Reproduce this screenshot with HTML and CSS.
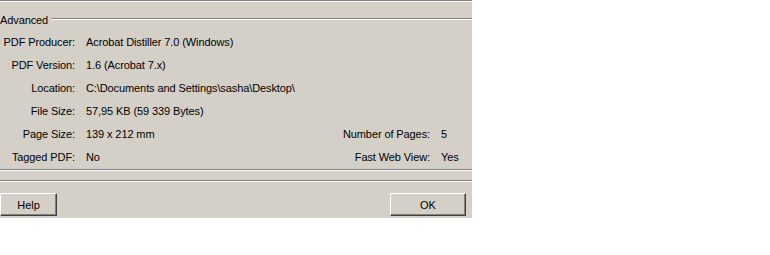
FILE: index.html
```html
<!DOCTYPE html>
<html lang="en">
<head>
    <meta charset="UTF-8">
    <title>Document Properties - Advanced</title>
    <link rel="stylesheet" href="styles.css">
</head>
<body>
    <div class="dialog">
        <div class="top-rule"></div>

        <div class="group-title">
            <span>Advanced</span>
            <div class="etched"></div>
        </div>

        <div class="props">
            <div class="label">PDF Producer:</div>
            <div class="value">Acrobat Distiller 7.0 (Windows)</div>
            <div></div><div></div>

            <div class="label">PDF Version:</div>
            <div class="value">1.6 (Acrobat 7.x)</div>
            <div></div><div></div>

            <div class="label">Location:</div>
            <div class="value">C:\Documents and Settings\sasha\Desktop\</div>
            <div></div><div></div>

            <div class="label">File Size:</div>
            <div class="value">57,95 KB (59 339 Bytes)</div>
            <div></div><div></div>

            <div class="label">Page Size:</div>
            <div class="value">139 x 212 mm</div>
            <div class="label">Number of Pages:</div>
            <div class="value">5</div>

            <div class="label">Tagged PDF:</div>
            <div class="value">No</div>
            <div class="label">Fast Web View:</div>
            <div class="value">Yes</div>
        </div>

        <div class="etched group-end"></div>
        <div class="etched separator"></div>

        <div class="buttons">
            <button class="btn btn-help">Help</button>
            <button class="btn btn-ok">OK</button>
        </div>
    </div>
</body>
</html>
```

FILE: styles.css
```css
/* classic windows dialog */
body {
    margin: 0;
    padding: 0;
    background-color: #fff;
    font-family: "Liberation Sans", Arial, sans-serif;
    font-size: 11px;
    letter-spacing: -0.1px;
    color: #000;
}

.dialog {
    width: 472px;
    height: 218px;
    background-color: #d4d0c8;
    display: flex;
    flex-direction: column;
}

.top-rule {
    border-top: 1px solid #808080;
    border-bottom: 1px solid #fff;
}

.etched {
    border-top: 1px solid #808080;
    border-bottom: 1px solid #fff;
}

.group-title {
    display: flex;
    align-items: center;
    height: 14px;
    margin-top: 11px;
}

.group-title span {
    padding-right: 3px;
}

.group-title .etched {
    flex: 1;
    margin-top: -2px;
}

.props {
    display: grid;
    grid-template-columns: 75px 1fr auto 31px;
    grid-auto-rows: 23px;
    column-gap: 11px;
    align-items: center;
    padding-top: 3px;
}

.label {
    text-align: right;
}

.group-end {
    margin-top: 1px;
}

.separator {
    margin-top: 9px;
}

.buttons {
    display: flex;
    justify-content: space-between;
    margin-top: 11px;
    padding-right: 6px;
}

.btn {
    font-family: "Liberation Sans", Arial, sans-serif;
    font-size: 11px;
    color: #000;
    background-color: #d4d0c8;
    height: 23px;
    padding: 0;
    border: 1px solid;
    border-color: #fff #404040 #404040 #fff;
    box-shadow: inset -1px -1px 0 #808080;
}

.btn-help {
    width: 57px;
}

.btn-ok {
    width: 76px;
}
```
